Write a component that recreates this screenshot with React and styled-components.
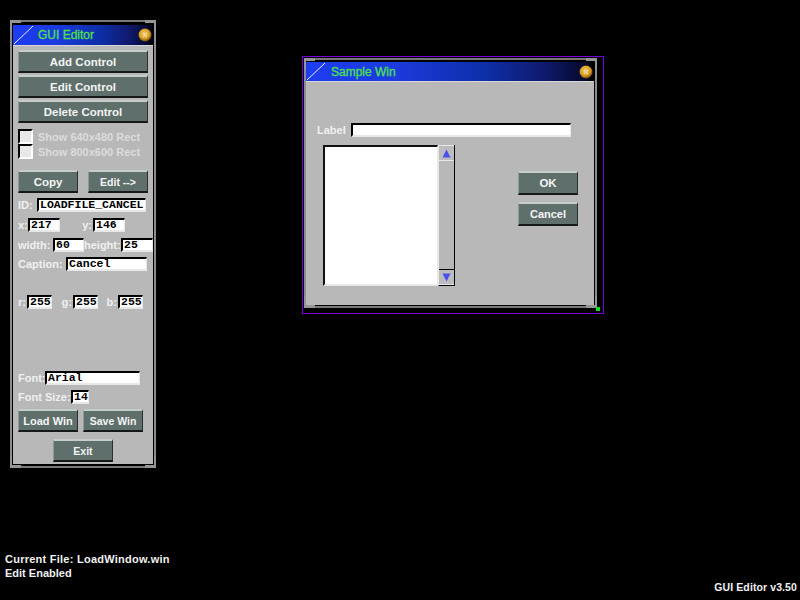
import React from 'react';
import styled, { createGlobalStyle } from 'styled-components';

const GlobalStyle = createGlobalStyle`
  html, body {
    margin: 0;
    padding: 0;
    background: #000;
  }
`;

const Desktop = styled.div`
  position: relative;
  width: 800px;
  height: 600px;
  background: #000;
  overflow: hidden;
  font-family: "Liberation Sans", Arial, sans-serif;
`;

// windows sit on a free canvas, so these are placed by coordinates
const WindowSpot = styled.div`
  position: absolute;
  left: ${({ $x }) => $x}px;
  top: ${({ $y }) => $y}px;
  width: ${({ $w }) => $w}px;
  height: ${({ $h }) => $h}px;
  box-sizing: border-box;
  padding: ${({ $pad }) => $pad || 0};
  border: ${({ $selected }) => ($selected ? '1px solid #7a00d8' : 'none')};
`;

const Frame = styled.div`
  position: relative;
  box-sizing: border-box;
  height: 100%;
  padding: ${({ $pad }) => $pad};
  display: flex;
  flex-direction: column;

  &::before {
    content: '';
    position: absolute;
    inset: 0;
    border: 2px solid #767976;
    border-left-color: #8a8d8b;
    border-right-color: #8a8d8b;
    pointer-events: none;
  }
`;

const Corner = styled.span`
  position: absolute;
  width: 9px;
  height: 9px;
  border: 0 solid #939693;
  ${({ $pos }) => $pos}
`;

const TitleBar = styled.div`
  position: relative;
  z-index: 1;
  flex: none;
  box-sizing: border-box;
  height: ${({ $h }) => $h}px;
  display: flex;
  align-items: center;
  padding-left: 25px;
  color: #4ee04a;
  font-size: 12px;
  -webkit-text-stroke: 0.3px #4ee04a;
  background: linear-gradient(90deg, #1d3df0 0%, #1c3ae0 30%, #0d2fa8 62%, #101a70 82%, #050a30 96%, #000 100%);
  border-bottom: 1px solid #d8d8d8;
`;

const Slash = styled.svg`
  position: absolute;
  left: 0;
  top: 0;
`;

const CloseBall = styled.svg`
  position: absolute;
  right: 1px;
  top: calc(50% - 7px);
`;

const Panel = styled.div`
  position: relative;
  z-index: 1;
  flex: 1;
  min-height: 0;
  background: #b8b8b8;
  display: flex;
  flex-direction: column;
`;

const EditorBody = styled(Panel)`
  padding: 4px 5px 0;
`;

const Button = styled.div`
  box-sizing: border-box;
  width: ${({ $w }) => $w}px;
  height: ${({ $h }) => $h || 23}px;
  flex: none;
  display: flex;
  align-items: center;
  justify-content: center;
  color: #f4f4f4;
  font-size: ${({ $fs }) => $fs || 11.5}px;
  font-weight: bold;
  background: #5f706c;
  border-top: 2px solid #c4cdca;
  border-left: 1px solid #8d9a97;
  border-right: 1px solid #2a2f2e;
  border-bottom: 2px solid #16191a;
`;

const ButtonStack = styled.div`
  display: flex;
  flex-direction: column;
  gap: 2px;
`;

const CheckRow = styled.div`
  display: flex;
  align-items: center;
  height: 15px;
  gap: 5px;
  color: #dcdcdc;
  font-size: 11px;
  font-weight: bold;
`;

const CheckGroup = styled.div`
  display: flex;
  flex-direction: column;
  margin-top: 6px;
`;

const CheckBox = styled.span`
  box-sizing: border-box;
  width: 15px;
  height: 15px;
  background: #e8e8e8;
  border: 2px solid #000;
  border-right-color: #fff;
  border-bottom-color: #fff;
`;

const SpacedRow = styled.div`
  display: flex;
  gap: ${({ $gap }) => $gap || 0}px;
  margin-top: ${({ $top }) => $top}px;
  margin-left: ${({ $left }) => $left || 0}px;
`;

const FieldRow = styled.div`
  display: flex;
  align-items: center;
  height: 16px;
  margin-top: ${({ $top }) => $top}px;
`;

const FieldLabel = styled.span`
  box-sizing: border-box;
  flex: none;
  color: #f0f0f0;
  font-size: 11px;
  font-weight: bold;
  width: ${({ $w }) => $w}px;
  padding-right: ${({ $right }) => ($right ? 1 : 0)}px;
  text-align: ${({ $right }) => ($right ? 'right' : 'left')};
  white-space: nowrap;
`;

const Field = styled.div`
  box-sizing: border-box;
  width: ${({ $w }) => $w}px;
  height: 14px;
  flex: none;
  padding-left: 1px;
  background: #fff;
  border-top: 2px solid #000;
  border-left: 2px solid #000;
  border-right: 1px solid #e8e8e8;
  border-bottom: 2px solid #e8e8e8;
  color: #000;
  font-family: "Liberation Mono", "Courier New", monospace;
  font-size: 11.5px;
  font-weight: bold;
  line-height: 10px;
  overflow: hidden;
  white-space: nowrap;
`;

const SampleBody = styled(Panel)`
  padding: 41px 0 0 11px;
`;

const LabelRow = styled.div`
  display: flex;
  align-items: center;
`;

const SampleContent = styled.div`
  display: flex;
  margin: 8px 0 0 6px;
`;

const ListBox = styled.div`
  box-sizing: border-box;
  width: 115px;
  height: 141px;
  background: #fff;
  border-top: 2px solid #111;
  border-left: 2px solid #111;
  border-right: 1px solid #e8e8e8;
  border-bottom: 2px solid #e8e8e8;
`;

const ScrollBar = styled.div`
  box-sizing: border-box;
  width: 17px;
  height: 141px;
  display: flex;
  flex-direction: column;
  justify-content: space-between;
  border-right: 1px solid #000;
  border-left: 1px solid #e8e8e8;
  border-bottom: 1px solid #000;
`;

const ScrollArrow = styled.div`
  box-sizing: border-box;
  height: 16px;
  display: flex;
  align-items: center;
  justify-content: center;
  background: #bcbcbc;
  border-top: 1px solid ${({ $dir }) => ($dir === 'down' ? '#000' : '#e8e8e8')};
  border-bottom: 1px solid #e8e8e8;
`;

const DialogButtons = styled.div`
  display: flex;
  flex-direction: column;
  gap: 7px;
  margin: 26px 0 0 63px;
`;

const Cursor = styled.svg`
  position: absolute;
  left: 524px;
  top: 269px;
`;

const ResizeGrip = styled.span`
  position: absolute;
  right: 3px;
  bottom: 2px;
  z-index: 2;
  width: 4px;
  height: 4px;
  background: #10e020;
`;

const StatusLines = styled.div`
  position: absolute;
  left: 5px;
  top: 552px;
  color: #f0f0f0;
  font-size: 11px;
  font-weight: bold;
  line-height: 14px;
`;

const FileLine = styled.div`
  letter-spacing: 0.25px;
`;

const Version = styled.div`
  position: absolute;
  right: 3px;
  bottom: 7px;
  color: #f0f0f0;
  font-size: 10.5px;
  font-weight: bold;
  letter-spacing: 0.1px;
`;

const WindowCorners = () => (
  <>
    <Corner $pos="left:0;top:0;border-width:3px 0 0 2px;" />
    <Corner $pos="right:0;top:0;border-width:3px 2px 0 0;" />
    <Corner $pos="left:0;bottom:0;border-width:0 0 3px 2px;" />
    <Corner $pos="right:0;bottom:0;border-width:0 2px 3px 0;" />
  </>
);

const TitleContent = ({ size }) => (
  <>
    <Slash width={size + 2} height={size} viewBox={`0 0 ${size + 2} ${size}`}>
      <line x1="1" y1={size - 1} x2={size} y2="1" stroke="#e8eeff" strokeWidth="1" />
    </Slash>
    <CloseBall width="14" height="14" viewBox="0 0 14 14">
      <defs>
        <radialGradient id="ball" cx="45%" cy="40%" r="60%">
          <stop offset="0%" stopColor="#f4d070" />
          <stop offset="65%" stopColor="#d89a20" />
          <stop offset="100%" stopColor="#6a4a08" />
        </radialGradient>
      </defs>
      <circle cx="7" cy="7" r="6.5" fill="url(#ball)" />
      <path d="M5 5l4 4M9 5l-4 4" stroke="#f0dc9c" strokeWidth="1.3" />
    </CloseBall>
  </>
);

const ArrowIcon = ({ dir }) => (
  <svg width="9" height="9" viewBox="0 0 9 9">
    <path d={dir === 'up' ? 'M4.5 0.5L8.5 8.5H0.5Z' : 'M0.5 0.5H8.5L4.5 8.5Z'} fill="#4a50f0" />
  </svg>
);

const EditorWindow = () => (
  <WindowSpot $x={10} $y={20} $w={146} $h={448}>
    <Frame $pad="5px 3px 4px">
      <WindowCorners />
      <TitleBar $h={21}>
        GUI Editor
        <TitleContent size={20} />
      </TitleBar>
      <EditorBody>
        <ButtonStack>
          <Button $w={130}>Add Control</Button>
          <Button $w={130}>Edit Control</Button>
          <Button $w={130}>Delete Control</Button>
        </ButtonStack>
        <CheckGroup>
          <CheckRow><CheckBox />Show 640x480 Rect</CheckRow>
          <CheckRow><CheckBox />Show 800x600 Rect</CheckRow>
        </CheckGroup>
        <SpacedRow $gap={10} $top={11}>
          <Button $w={60}>Copy</Button>
          <Button $w={60} $fs={10.5}>Edit --&gt;</Button>
        </SpacedRow>
        <FieldRow $top={4}>
          <FieldLabel $w={19}>ID:</FieldLabel>
          <Field $w={109}>LOADFILE_CANCEL</Field>
        </FieldRow>
        <FieldRow $top={4}>
          <FieldLabel $w={10}>x:</FieldLabel>
          <Field $w={32}>217</Field>
          <FieldLabel $w={33} $right>y:</FieldLabel>
          <Field $w={32}>146</Field>
        </FieldRow>
        <FieldRow $top={4}>
          <FieldLabel $w={35}>width:</FieldLabel>
          <Field $w={31}>60</Field>
          <FieldLabel $w={37}>height:</FieldLabel>
          <Field $w={32}>25</Field>
        </FieldRow>
        <FieldRow $top={3}>
          <FieldLabel $w={48}>Caption:</FieldLabel>
          <Field $w={81}>Cancel</Field>
        </FieldRow>
        <FieldRow $top={22}>
          <FieldLabel $w={9}>r:</FieldLabel>
          <Field $w={25}>255</Field>
          <FieldLabel $w={21} $right>g:</FieldLabel>
          <Field $w={25}>255</Field>
          <FieldLabel $w={20} $right>b:</FieldLabel>
          <Field $w={25}>255</Field>
        </FieldRow>
        <FieldRow $top={60}>
          <FieldLabel $w={27}>Font:</FieldLabel>
          <Field $w={95}>Arial</Field>
        </FieldRow>
        <FieldRow $top={3}>
          <FieldLabel $w={53}>Font Size:</FieldLabel>
          <Field $w={18}>14</Field>
        </FieldRow>
        <SpacedRow $gap={5} $top={4}>
          <Button $w={60} $fs={11}>Load Win</Button>
          <Button $w={60} $fs={10.5}>Save Win</Button>
        </SpacedRow>
        <SpacedRow $top={7} $left={35}>
          <Button $w={60} $fs={10.5}>Exit</Button>
        </SpacedRow>
      </EditorBody>
    </Frame>
  </WindowSpot>
);

const SampleWindow = () => (
  <WindowSpot $x={302} $y={56} $w={302} $h={258} $selected $pad="1px 6px 5px 1px">
    <Frame $pad="4px 3px 3px 2px">
      <WindowCorners />
      <TitleBar $h={20}>
        Sample Win
        <TitleContent size={19} />
      </TitleBar>
      <SampleBody>
        <LabelRow>
          <FieldLabel $w={34}>Label</FieldLabel>
          <Field $w={220} />
        </LabelRow>
        <SampleContent>
          <ListBox />
          <ScrollBar>
            <ScrollArrow $dir="up"><ArrowIcon dir="up" /></ScrollArrow>
            <ScrollArrow $dir="down"><ArrowIcon dir="down" /></ScrollArrow>
          </ScrollBar>
          <DialogButtons>
            <Button $w={60} $h={24}>OK</Button>
            <Button $w={60} $h={24} $fs={11}>Cancel</Button>
          </DialogButtons>
        </SampleContent>
      </SampleBody>
    </Frame>
    <ResizeGrip />
  </WindowSpot>
);

const App = () => (
  <Desktop>
    <GlobalStyle />
    <EditorWindow />
    <SampleWindow />
    <Cursor width="19" height="23" viewBox="0 0 19 23">
      <path d="M3 2.5L16.5 13L9 14L3.5 21Z" fill="#a8b4a0" stroke="#3fa81e" strokeWidth="2.2" />
    </Cursor>
    <StatusLines>
      <FileLine>Current File: LoadWindow.win</FileLine>
      <div>Edit Enabled</div>
    </StatusLines>
    <Version>GUI Editor v3.50</Version>
  </Desktop>
);

export default App;
